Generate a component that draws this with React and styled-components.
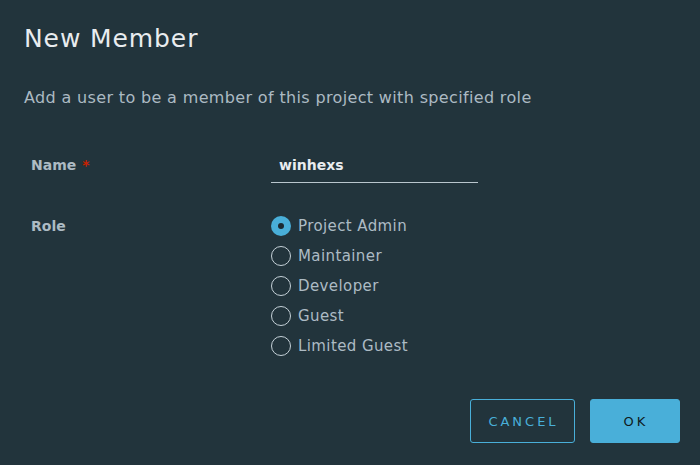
import React, { useState } from "react";
import styled, { createGlobalStyle } from "styled-components";

const GlobalStyle = createGlobalStyle`
  html, body {
    margin: 0;
    padding: 0;
    background: #22343c;
  }
  body {
    font-family: "DejaVu Sans", Verdana, sans-serif;
  }
`;

const Modal = styled.div`
  width: 700px;
  height: 465px;
  box-sizing: border-box;
  background: #22343c;
  padding: 21px 20px 0 24px;
  display: flex;
  flex-direction: column;
`;

const Title = styled.h3`
  margin: 0;
  font-size: 25px;
  line-height: 36px;
  font-weight: 400;
  color: #e9ecef;
  letter-spacing: 0.9px;
`;

const Description = styled.p`
  margin: 29px 0 0;
  font-size: 16px;
  line-height: 24px;
  color: #acbac3;
  letter-spacing: 0.35px;
`;

const Form = styled.div`
  margin-top: 40px;
  padding-left: 7px;
  display: flex;
  flex-direction: column;
  gap: 28px;
`;

const Row = styled.div`
  display: grid;
  grid-template-columns: 240px 1fr;
  align-items: start;
`;

const Label = styled.label`
  font-size: 14px;
  font-weight: 700;
  line-height: 30px;
  color: #adbbc4;
`;

const Required = styled.span`
  color: #c92100;
  margin-left: 6px;
`;

const TextInput = styled.input`
  width: 207px;
  height: 33px;
  box-sizing: border-box;
  background: transparent;
  border: none;
  border-bottom: 1px solid #b9c6cd;
  color: #e9ecef;
  font-family: inherit;
  font-size: 14px;
  font-weight: 600;
  padding: 0 8px 3px;
  outline: none;
`;

const RadioList = styled.div`
  display: flex;
  flex-direction: column;
`;

const RadioRow = styled.label`
  display: flex;
  align-items: center;
  gap: 7px;
  height: 30px;
  cursor: pointer;
  font-size: 15px;
  letter-spacing: 0.4px;
  color: #adbbc4;
`;

const RadioCircle = styled.span`
  width: 20px;
  height: 20px;
  flex: none;
  box-sizing: border-box;
  border-radius: 50%;
  border: ${(p) => (p.$checked ? "none" : "1px solid #c5d1d8")};
  background: ${(p) => (p.$checked ? "#49afd9" : "transparent")};
  display: flex;
  align-items: center;
  justify-content: center;

  &::after {
    content: "";
    display: ${(p) => (p.$checked ? "block" : "none")};
    width: 6px;
    height: 6px;
    border-radius: 50%;
    background: #1b2a32;
  }
`;

const Footer = styled.div`
  margin-top: auto;
  padding-bottom: 22px;
  display: flex;
  justify-content: flex-end;
  gap: 15px;
`;

const Button = styled.button`
  height: 44px;
  width: ${(p) => p.$width}px;
  box-sizing: border-box;
  border-radius: 3px;
  border: 1px solid #49afd9;
  background: ${(p) => (p.$primary ? "#49afd9" : "transparent")};
  color: ${(p) => (p.$primary ? "#0f1a20" : "#49afd9")};
  font-family: inherit;
  font-size: 13px;
  font-weight: 400;
  letter-spacing: 3px;
  text-transform: uppercase;
  padding: 0 0 0 2px;
  cursor: pointer;
`;

const roles = ["Project Admin", "Maintainer", "Developer", "Guest", "Limited Guest"];

export default function App() {
  const [role, setRole] = useState("Project Admin");
  const [name, setName] = useState("winhexs");

  return (
    <>
      <GlobalStyle />
      <Modal>
        <Title>New Member</Title>
        <Description>Add a user to be a member of this project with specified role</Description>
        <Form>
          <Row>
            <Label>
              Name<Required>*</Required>
            </Label>
            <TextInput value={name} onChange={(e) => setName(e.target.value)} />
          </Row>
          <Row>
            <Label>Role</Label>
            <RadioList>
              {roles.map((r) => (
                <RadioRow key={r} onClick={() => setRole(r)}>
                  <RadioCircle $checked={role === r} />
                  {r}
                </RadioRow>
              ))}
            </RadioList>
          </Row>
        </Form>
        <Footer>
          <Button $width={105}>Cancel</Button>
          <Button $primary $width={90}>OK</Button>
        </Footer>
      </Modal>
    </>
  );
}
